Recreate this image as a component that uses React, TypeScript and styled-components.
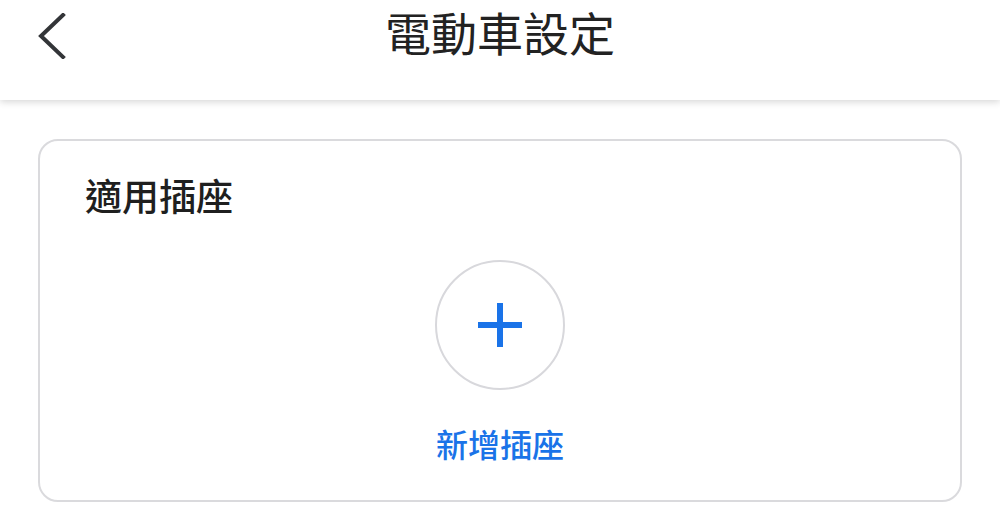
import styled, { createGlobalStyle } from "styled-components";

const GlobalStyle = createGlobalStyle`
  body {
    margin: 0;
    background: #ffffff;
    font-family: "Noto Sans CJK TC", "Noto Sans", sans-serif;
  }
`;

const App = () => {
  return (
    <Page>
      <GlobalStyle />
      <Header>
        <BackButton aria-label="back">
          <svg width="30" height="46" viewBox="0 0 30 46" fill="none">
            <path
              d="M25 2 L3 23 L25 44"
              stroke="#333538"
              strokeWidth="4"
              strokeLinecap="square"
              strokeLinejoin="miter"
            />
          </svg>
        </BackButton>
        <Title>電動車設定</Title>
        <div />
      </Header>
      <Content>
        <Card>
          <CardTitle>適用插座</CardTitle>
          <AddCircle>
            <svg width="44" height="44" viewBox="0 0 44 44">
              <rect x="19" y="0" width="6" height="44" fill="#1a73e8" />
              <rect x="0" y="19" width="44" height="6" fill="#1a73e8" />
            </svg>
          </AddCircle>
          <AddLabel>新增插座</AddLabel>
        </Card>
      </Content>
    </Page>
  );
};

const Page = styled.div`
  width: 1000px;
  min-height: 526px;
`;

const Header = styled.div`
  height: 100px;
  box-sizing: border-box;
  padding: 0 38px 28px;
  display: grid;
  grid-template-columns: 1fr auto 1fr;
  align-items: center;
  background: #ffffff;
  box-shadow: 0 2px 7px rgba(0, 0, 0, 0.16);
  position: relative;
`;

const BackButton = styled.button`
  border: none;
  background: none;
  padding: 0;
  width: 30px;
  height: 46px;
  display: flex;
  align-items: center;
  justify-content: flex-start;
`;

const Title = styled.h1`
  margin: 0 0 10px;
  font-size: 46px;
  line-height: 56px;
  font-weight: 400;
  color: #222222;
  letter-spacing: 0;
`;

const Content = styled.div`
  padding: 39px 38px 0;
`;

const Card = styled.div`
  border: 2px solid #dadadd;
  border-radius: 20px;
  padding: 32px 45px 37px;
  display: flex;
  flex-direction: column;
  align-items: center;
`;

const CardTitle = styled.h2`
  align-self: flex-start;
  margin: 0;
  font-size: 37px;
  line-height: 44px;
  font-weight: 500;
  color: #1f1f1f;
`;

const AddCircle = styled.button`
  margin-top: 43px;
  width: 130px;
  height: 130px;
  box-sizing: border-box;
  border-radius: 50%;
  border: 2px solid #d8d8dc;
  background: #ffffff;
  display: flex;
  align-items: center;
  justify-content: center;
  padding: 0;
`;

const AddLabel = styled.div`
  margin-top: 33px;
  font-size: 32px;
  line-height: 40px;
  font-weight: 500;
  color: #1a73e8;
`;

export default App;
